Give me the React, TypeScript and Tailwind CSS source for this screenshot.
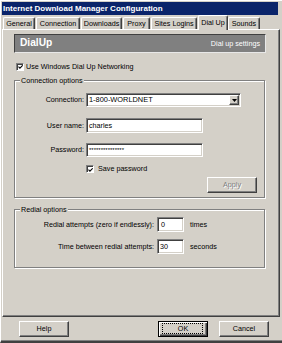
import React from "react";

const sunken =
  "bg-white border border-t-[#808080] border-l-[#808080] border-r-white border-b-white shadow-[inset_1px_1px_0_#404040,inset_-1px_-1px_0_#d4d0c8]";
const raised =
  "bg-[#d4d0c8] border border-t-white border-l-white border-r-[#404040] border-b-[#404040] shadow-[inset_-1px_-1px_0_#808080]";

function CheckBox() {
  return (
    <span className="w-[8px] h-[8px] shrink-0 bg-white border border-t-[#808080] border-l-[#808080] border-b-white border-r-white shadow-[inset_1px_1px_0_#404040] flex items-center justify-center">
      <svg width="6" height="6" viewBox="0 0 6 6" className="ml-[1px] mt-[1px]">
        <path d="M0.6 2.6 L2.3 4.4 L5.6 0.9" stroke="#000" strokeWidth="1.3" fill="none" />
      </svg>
    </span>
  );
}

function Tab({ label, w, ml, selected }: { label: string; w: string; ml: string; selected?: boolean }) {
  if (selected) {
    return (
      <div
        className={`${w} ${ml} relative z-10 h-[15px] mb-[-1px] bg-[#d4d0c8] border-t border-l border-white border-r border-r-[#404040] shadow-[inset_-1px_0_0_#808080] rounded-t-[2px] flex justify-center pt-[2px] leading-[9px]`}
      >
        {label}
      </div>
    );
  }
  return (
    <div
      className={`${w} ${ml} h-[12px] bg-[#d4d0c8] border-t border-l border-white border-r border-r-[#404040] shadow-[inset_-1px_0_0_#808080] rounded-t-[2px] flex justify-center pt-[1px] leading-[9px]`}
    >
      {label}
    </div>
  );
}

export default function App() {
  return (
    <div className="w-[282px] h-[343px] overflow-hidden bg-[#d4d0c8] border-t border-l border-white border-b-2 border-b-[#404040] shadow-[inset_0_-1px_0_#808080] font-['Liberation_Sans',Arial,sans-serif] text-[7.2px] text-black leading-none flex flex-col">
      {/* Title bar */}
      <div className="ml-[1px] mt-[1px] w-[276px] h-[13px] shrink-0 bg-[#0a246a] text-white font-bold text-[8px] leading-[13px] pl-[1px] whitespace-nowrap">
        Internet Download Manager Configuration
      </div>

      {/* Tabs */}
      <div className="h-[14px] shrink-0 flex items-end whitespace-nowrap">
        <Tab label="General" w="w-[32px]" ml="ml-[2px]" />
        <Tab label="Connection" w="w-[44px]" ml="ml-[1px]" />
        <Tab label="Downloads" w="w-[41px]" ml="ml-[1px]" />
        <Tab label="Proxy" w="w-[27px]" ml="ml-[1px]" />
        <Tab label="Sites Logins" w="w-[46px]" ml="ml-[1px]" />
        <Tab label="Dial Up" w="w-[30px]" ml="ml-[1px]" selected />
        <Tab label="Sounds" w="w-[32px]" ml="ml-0" />
      </div>

      {/* Panel */}
      <div className="ml-[1px] w-[278px] h-[288px] shrink-0 border-l border-t border-white border-r border-b border-r-[#404040] border-b-[#404040] shadow-[inset_-1px_-1px_0_#808080] flex flex-col">
        {/* Header */}
        <div className="ml-[11px] mt-[4px] w-[252px] h-[19px] shrink-0 bg-[#808080] border border-t-[#404040] border-l-[#404040] border-r-[#e8e8e8] border-b-[#e8e8e8] flex items-center justify-between px-[5px] text-white">
          <span className="font-bold text-[10.2px]">DialUp</span>
          <span className="mt-[1px]">Dial up settings</span>
        </div>

        {/* Use Windows Dial Up */}
        <div className="ml-[13px] mt-[9px] h-[9px] flex items-center">
          <CheckBox />
          <span className="ml-[2px]">Use Windows Dial Up Networking</span>
        </div>

        {/* Connection options */}
        <div className="relative ml-[11px] mt-[9px] w-[251px] border border-[#808080] shadow-[inset_1px_1px_0_#fff,1px_1px_0_#fff] flex flex-col pb-[4px]">
          <span className="absolute left-[5px] top-[-5px] bg-[#d4d0c8] px-[1px] leading-[9px]">Connection options</span>

          <div className="mt-[12px] h-[14px] flex items-center">
            <span className="w-[69px] text-right">Connection:</span>
            <div className={`${sunken} ml-[2px] w-[155px] h-[14px] flex items-center pl-[2px] pr-[1px]`}>
              <span className="flex-1 text-[7.4px]">1-800-WORLDNET</span>
              <span className={`${raised} w-[10px] h-[10px] flex items-center justify-center`}>
                <svg width="5" height="3" viewBox="0 0 5 3">
                  <path d="M0 0 H5 L2.5 3 Z" fill="#000" />
                </svg>
              </span>
            </div>
          </div>

          <div className="mt-[11px] h-[15px] flex items-center">
            <span className="w-[69px] text-right">User name:</span>
            <div className={`${sunken} ml-[2px] w-[117px] h-[15px] flex items-center pl-[2px]`}>charles</div>
          </div>

          <div className="mt-[10px] h-[14px] flex items-center">
            <span className="w-[69px] text-right">Password:</span>
            <div className={`${sunken} ml-[2px] w-[117px] h-[14px] flex items-center pl-[2px] text-[6px]`}>
              ***************
            </div>
          </div>

          <div className="mt-[8px] h-[8px] flex items-center ml-[71px]">
            <CheckBox />
            <span className="ml-[4px]">Save password</span>
          </div>

          <div className="mt-[4px] h-[16px] flex">
            <div
              className={`${raised} ml-[192px] w-[50px] h-[16px] flex items-center justify-center text-[#808080] [text-shadow:1px_1px_0_#fff]`}
            >
              Apply
            </div>
          </div>
        </div>

        {/* Redial options */}
        <div className="relative ml-[11px] mt-[11px] w-[251px] border border-[#808080] shadow-[inset_1px_1px_0_#fff,1px_1px_0_#fff] flex flex-col pb-[13px]">
          <span className="absolute left-[5px] top-[-5px] bg-[#d4d0c8] px-[1px] leading-[9px]">Redial options</span>

          <div className="mt-[7px] h-[15px] flex items-center">
            <span className="w-[139px] text-right">Redial attempts (zero if endlessly):</span>
            <div className={`${sunken} ml-[3px] w-[27px] h-[15px] flex items-center pl-[3px]`}>0</div>
            <span className="ml-[6px]">times</span>
          </div>

          <div className="mt-[7px] h-[15px] flex items-center">
            <span className="w-[139px] text-right">Time between redial attempts:</span>
            <div className={`${sunken} ml-[3px] w-[27px] h-[15px] flex items-center pl-[2px]`}>30</div>
            <span className="ml-[6px]">seconds</span>
          </div>
        </div>
      </div>

      {/* Bottom buttons */}
      <div className="mt-[4px] h-[16px] shrink-0 flex">
        <div className={`${raised} ml-[18px] w-[50px] h-[16px] flex items-center justify-center`}>Help</div>
        <div className="relative ml-[89px] w-[50px] h-[16px] border border-black bg-[#d4d0c8] shadow-[inset_1px_1px_0_#fff,inset_-1px_-1px_0_#404040,inset_-2px_-2px_0_#808080] flex items-center justify-center">
          <span className="mb-[1px]">OK</span>
          <span className="absolute left-[3px] right-[4px] top-[1px] bottom-[2px] border border-dotted border-black" />
        </div>
        <div className={`${raised} ml-[11px] w-[50px] h-[16px] flex items-center justify-center`}>Cancel</div>
      </div>
    </div>
  );
}
